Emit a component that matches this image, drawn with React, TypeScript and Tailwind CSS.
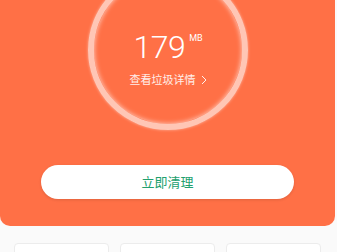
import React from "react";

const stats = ["a", "b", "c"];

const App: React.FC = () => {
  return (
    <div className="w-[337px] h-[252px] overflow-hidden bg-[#fafafa] font-['Roboto','Noto_Sans_CJK_SC',sans-serif]">
      {/* orange header panel */}
      <div className="w-[335px] h-[226px] bg-[#ff7046] rounded-b-[10px] overflow-hidden flex flex-col items-center">
        <div className="mt-[-30px] ml-[1px] w-[160px] h-[160px] shrink-0 rounded-full border-[6px] border-white/60 shadow-[inset_0_0_5px_rgba(255,255,255,0.7),0_0_3px_rgba(255,255,255,0.5)] flex flex-col items-center">
          <div className="mt-[55px] flex items-start text-white">
            <span className="text-[32px] leading-none font-light tracking-[-0.5px]">179</span>
            <span className="ml-[4px] mt-[3px] text-[9px] leading-none">MB</span>
          </div>
          <div className="mt-[11px] flex items-center text-white/90 text-[11px] leading-none font-['Noto_Sans_CJK_SC',sans-serif]">
            <span>查看垃圾详情</span>
            <svg className="ml-[5px]" width="6" height="10" viewBox="0 0 6 10" fill="none">
              <path d="M1 1l4 4-4 4" stroke="white" strokeOpacity="0.9" strokeWidth="1" />
            </svg>
          </div>
        </div>
        <button className="mt-[35px] w-[253px] h-[34px] rounded-full bg-white shadow-[0_1px_3px_rgba(0,0,0,0.12)] text-[13px] text-[#22a06e] font-['Noto_Sans_CJK_SC',sans-serif]">
          立即清理
        </button>
      </div>
      {/* summary cards */}
      <div className="mt-[17px] pl-[14px] flex gap-[11px]">
        {stats.map((s) => (
          <div
            key={s}
            className="w-[95px] h-[60px] bg-white border border-[#ececec] rounded-[4px]"
          />
        ))}
      </div>
    </div>
  );
};

export default App;
